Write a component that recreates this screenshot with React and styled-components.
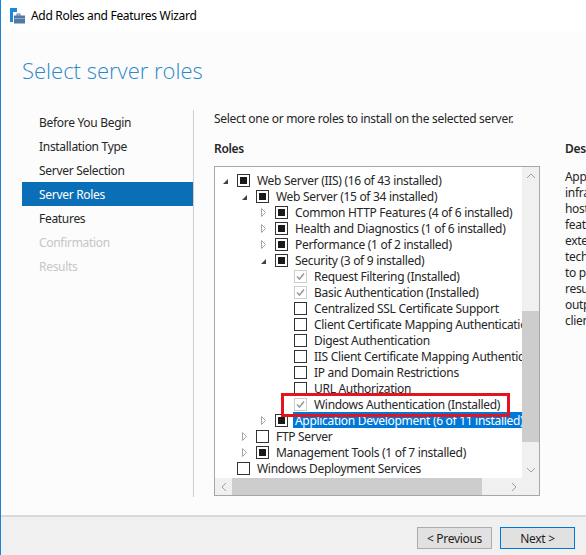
import React from "react";
import styled, { createGlobalStyle } from "styled-components";

const GlobalStyle = createGlobalStyle`
  html, body {
    margin: 0;
    padding: 0;
    background: #fcfcfc;
  }
  body {
    font-family: "Noto Sans", "Liberation Sans", sans-serif;
    font-size: 12px;
    letter-spacing: -0.3px;
    color: #1e1e1e;
  }
`;

const NAV = [
  { label: "Before You Begin" },
  { label: "Installation Type" },
  { label: "Server Selection" },
  { label: "Server Roles", active: true },
  { label: "Features" },
  { label: "Confirmation", disabled: true },
  { label: "Results", disabled: true },
];

const ROWS = [
  { level: 0, exp: "open", check: "partial", label: "Web Server (IIS) (16 of 43 installed)" },
  { level: 1, exp: "open", check: "partial", label: "Web Server (15 of 34 installed)" },
  { level: 2, exp: "closed", check: "partial", label: "Common HTTP Features (4 of 6 installed)" },
  { level: 2, exp: "closed", check: "partial", label: "Health and Diagnostics (1 of 6 installed)" },
  { level: 2, exp: "closed", check: "partial", label: "Performance (1 of 2 installed)" },
  { level: 2, exp: "open", check: "partial", label: "Security (3 of 9 installed)" },
  { level: 3, check: "installed", label: "Request Filtering (Installed)" },
  { level: 3, check: "installed", label: "Basic Authentication (Installed)" },
  { level: 3, check: "empty", label: "Centralized SSL Certificate Support" },
  { level: 3, check: "empty", label: "Client Certificate Mapping Authentication" },
  { level: 3, check: "empty", label: "Digest Authentication" },
  { level: 3, check: "empty", label: "IIS Client Certificate Mapping Authentication" },
  { level: 3, check: "empty", label: "IP and Domain Restrictions" },
  { level: 3, check: "empty", label: "URL Authorization" },
  { level: 3, check: "installed", label: "Windows Authentication (Installed)" },
  { level: 2, exp: "closed", check: "partial", label: "Application Development (6 of 11 installed)", selected: true },
  { level: 1, exp: "closed", check: "empty", label: "FTP Server" },
  { level: 1, exp: "closed", check: "partial", label: "Management Tools (1 of 7 installed)" },
  { level: 0, check: "empty", label: "Windows Deployment Services" },
];

const DESCRIPTION = [
  "Application Development provides",
  "infrastructure for developing and",
  "hosting Web applications. Use these",
  "features to create Web content or",
  "extend the functionality of IIS. These",
  "technologies typically provide a way",
  "to perform dynamic operations that",
  "result in the creation of HTML",
  "output, which IIS then sends to fulfill",
  "client requests.",
];

function WizardIcon() {
  return (
    <svg width="15" height="16" viewBox="0 0 15 16">
      <rect x="0" y="0" width="7" height="4" fill="#1e88d8" />
      <rect x="0" y="4" width="3" height="10" fill="#1e88d8" />
      <rect x="7" y="6" width="3" height="2" fill="none" stroke="#5a7d9c" strokeWidth="1" />
      <rect x="4" y="7.5" width="11" height="8" fill="#4f7aa3" />
      <rect x="4" y="10" width="11" height="1" fill="#86a9c9" />
    </svg>
  );
}

function Expander({ kind }) {
  if (kind === "open") {
    return (
      <svg width="12" height="16" viewBox="0 0 12 16">
        <path d="M8 7 L8 12 L3 12 Z" fill="#404040" />
      </svg>
    );
  }
  if (kind === "closed") {
    return (
      <svg width="12" height="16" viewBox="0 0 12 16">
        <path d="M3.5 4.5 L7.5 8.5 L3.5 12.5 Z" fill="none" stroke="#a6a6a6" strokeWidth="1" />
      </svg>
    );
  }
  return <svg width="12" height="16" />;
}

function Chevron({ dir }) {
  const paths = {
    up: "M1 6 L5 2 L9 6",
    down: "M1 2 L5 6 L9 2",
    left: "M6 1 L2 5 L6 9",
    right: "M2 1 L6 5 L2 9",
  };
  const vertical = dir === "up" || dir === "down";
  return (
    <svg width={vertical ? 10 : 8} height={vertical ? 8 : 10} viewBox={vertical ? "0 0 10 8" : "0 0 8 10"}>
      <path d={paths[dir]} fill="none" stroke="#a0a0a0" strokeWidth="1" />
    </svg>
  );
}

function CheckBox({ state }) {
  return (
    <Box $state={state}>
      {state === "partial" && <Fill />}
      {state === "installed" && (
        <svg width="11" height="11" viewBox="0 0 11 11">
          <path d="M2 5.5 L4.5 8 L9 2.5" fill="none" stroke="#9c9c9c" strokeWidth="1.6" />
        </svg>
      )}
    </Box>
  );
}

export default function App() {
  return (
    <>
      <GlobalStyle />
      <Window>
        <TitleBar>
          <WizardIcon />
          <span>Add Roles and Features Wizard</span>
        </TitleBar>
        <Content>
          <Heading>Select server roles</Heading>
          <Body>
            <Nav>
              {NAV.map((item) => (
                <NavItem key={item.label} $active={item.active} $disabled={item.disabled}>
                  {item.label}
                </NavItem>
              ))}
            </Nav>
            <Pane>
              <Intro>Select one or more roles to install on the selected server.</Intro>
              <Columns>
                <RolesColumn>
                  <SectionTitle>Roles</SectionTitle>
                  <TreeBox>
                    <TreeGrid>
                      <Viewport>
                        {ROWS.map((row) => (
                          <Row key={row.label} $level={row.level}>
                            <Expander kind={row.exp} />
                            <CheckBox state={row.check} />
                            <Label $selected={row.selected}>{row.label}</Label>
                          </Row>
                        ))}
                        <Highlight />
                      </Viewport>
                      <VScroll>
                        <Arrow>
                          <Chevron dir="up" />
                        </Arrow>
                        <Track>
                          <VThumb style={{ marginTop: 127, height: 131 }} />
                        </Track>
                        <Arrow>
                          <Chevron dir="down" />
                        </Arrow>
                      </VScroll>
                      <HScroll>
                        <Arrow>
                          <Chevron dir="left" />
                        </Arrow>
                        <Track $horizontal>
                          <HThumb style={{ width: 250 }} />
                        </Track>
                        <Arrow>
                          <Chevron dir="right" />
                        </Arrow>
                      </HScroll>
                      <Corner />
                    </TreeGrid>
                  </TreeBox>
                </RolesColumn>
                <DescColumn>
                  <SectionTitle>Description</SectionTitle>
                  <DescText>
                    {DESCRIPTION.map((line) => (
                      <div key={line}>{line}</div>
                    ))}
                  </DescText>
                </DescColumn>
              </Columns>
            </Pane>
          </Body>
        </Content>
        <Footer>
          <Button>&lt; Previous</Button>
          <Button $primary>Next &gt;</Button>
        </Footer>
      </Window>
    </>
  );
}

const Window = styled.div`
  width: 586px;
  height: 555px;
  overflow: hidden;
  display: flex;
  flex-direction: column;
  border-left: 1px solid #1883d7;
  box-sizing: border-box;
  background: #fcfcfc;
`;

const TitleBar = styled.div`
  height: 31px;
  flex: none;
  display: flex;
  align-items: center;
  gap: 6px;
  padding-left: 9px;
  background: #ffffff;
  font-size: 12px;
  color: #000;
  span {
    margin-top: -1px;
  }
`;

const Content = styled.div`
  flex: 1;
  padding: 24px 0 0 21px;
  display: flex;
  flex-direction: column;
  min-height: 0;
`;

const Heading = styled.h1`
  margin: 0 0 25px 0;
  font-family: "Open Sans", "Noto Sans", sans-serif;
  font-weight: 300;
  font-size: 22px;
  line-height: 30px;
  letter-spacing: 0;
  color: #2b89c9;
`;

const Body = styled.div`
  display: flex;
  align-items: flex-start;
`;

const Nav = styled.div`
  width: 171px;
  height: 387px;
  border-right: 1px solid #cfcfcf;
  flex: none;
`;

const NavItem = styled.div`
  height: 24px;
  box-sizing: border-box;
  padding: 2px 0 0 17px;
  line-height: 22px;
  background: ${(p) => (p.$active ? "#0a6fb6" : "transparent")};
  color: ${(p) => (p.$active ? "#fff" : p.$disabled ? "#c6c6c6" : "#262626")};
`;

const Pane = styled.div`
  padding-left: 20px;
  white-space: nowrap;
`;

const Intro = styled.div`
  height: 16px;
  line-height: 18px;
  color: #262626;
  margin-bottom: 14px;
`;

const Columns = styled.div`
  display: flex;
  gap: 25px;
`;

const RolesColumn = styled.div`
  width: 326px;
  flex: none;
`;

const SectionTitle = styled.div`
  height: 16px;
  line-height: 17px;
  font-weight: 600;
  color: #262626;
  margin-bottom: 10px;
`;

const TreeBox = styled.div`
  width: 326px;
  height: 330px;
  box-sizing: border-box;
  border: 1px solid #a7a7a7;
  background: #fff;
`;

const TreeGrid = styled.div`
  display: grid;
  grid-template-columns: 307px 17px;
  grid-template-rows: 311px 17px;
  height: 100%;
`;

const Viewport = styled.div`
  position: relative;
  overflow: hidden;
  padding-top: 5px;
  box-sizing: border-box;
`;

const Row = styled.div`
  height: 16px;
  display: flex;
  align-items: center;
  padding-left: ${(p) => 5 + p.$level * 19}px;
  white-space: nowrap;
  svg {
    flex: none;
  }
`;

const Box = styled.div`
  width: 13px;
  height: 13px;
  box-sizing: border-box;
  margin-left: 5px;
  flex: none;
  display: flex;
  align-items: center;
  justify-content: center;
  border: 1px solid ${(p) => (p.$state === "installed" ? "#cdcdcd" : "#333")};
  background: #fff;
`;

const Fill = styled.div`
  width: 7px;
  height: 7px;
  background: #1a1a1a;
`;

const Label = styled.span`
  margin-left: 5px;
  padding: 1px 2px 0;
  height: 16px;
  box-sizing: border-box;
  line-height: 16px;
  color: ${(p) => (p.$selected ? "#fff" : "#262626")};
  background: ${(p) => (p.$selected ? "#0078d7" : "transparent")};
`;

const Highlight = styled.div`
  position: absolute;
  left: 66px;
  top: 226px;
  width: 229px;
  height: 24px;
  box-sizing: border-box;
  border: 3px solid #e3131f;
  pointer-events: none;
`;

const VScroll = styled.div`
  display: flex;
  flex-direction: column;
  background: #f0f0f0;
`;

const HScroll = styled.div`
  display: flex;
  background: #f0f0f0;
`;

const Arrow = styled.div`
  width: 17px;
  height: 17px;
  flex: none;
  display: flex;
  align-items: center;
  justify-content: center;
`;

const Track = styled.div`
  flex: 1;
  display: flex;
  flex-direction: ${(p) => (p.$horizontal ? "row" : "column")};
`;

const VThumb = styled.div`
  width: 17px;
  background: #cdcdcd;
`;

const HThumb = styled.div`
  height: 17px;
  background: #cdcdcd;
`;

const Corner = styled.div`
  background: #f0f0f0;
`;

const DescColumn = styled.div`
  flex: none;
`;

const DescText = styled.div`
  padding-top: 3px;
  line-height: 16px;
  color: #262626;
`;

const Footer = styled.div`
  height: 40px;
  flex: none;
  box-sizing: border-box;
  border-top: 2px solid #d9d9d9;
  background: #f0f0f0;
  display: flex;
  justify-content: flex-end;
  align-items: flex-start;
  gap: 8px;
  padding: 10px 11px 0 0;
`;

const Button = styled.div`
  width: 75px;
  height: 22px;
  box-sizing: border-box;
  display: flex;
  align-items: center;
  justify-content: center;
  background: #e1e1e1;
  border: 1px solid ${(p) => (p.$primary ? "#0078d7" : "#adadad")};
  color: #1e1e1e;
  font-size: 12px;
`;
